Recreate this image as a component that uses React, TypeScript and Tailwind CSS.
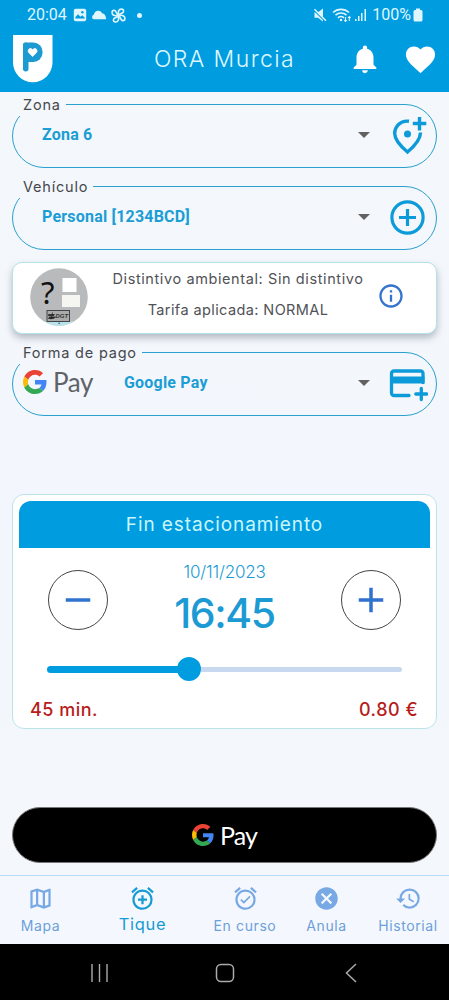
import type { ReactNode } from "react";
import {
  MdAdd,
  MdAlarmOn,
  MdCancel,
  MdFavorite,
  MdHistory,
  MdInfoOutline,
  MdNotifications,
  MdOutlineAddAlarm,
  MdOutlineMap,
  MdRemove,
} from "react-icons/md";

function GoogleG({ className }: { className: string }) {
  return (
    <svg viewBox="0 0 48 48" className={className}>
      <path
        fill="#EA4335"
        d="M24 9.5c3.54 0 6.71 1.22 9.21 3.6l6.85-6.85C35.9 2.38 30.47 0 24 0 14.62 0 6.51 5.38 2.56 13.22l7.98 6.19C12.43 13.72 17.74 9.5 24 9.5z"
      />
      <path
        fill="#4285F4"
        d="M46.98 24.55c0-1.57-.15-3.09-.38-4.55H24v9.02h12.94c-.58 2.96-2.26 5.48-4.78 7.18l7.73 6c4.51-4.18 7.09-10.36 7.09-17.65z"
      />
      <path
        fill="#FBBC05"
        d="M10.53 28.59c-.48-1.45-.76-2.99-.76-4.59s.27-3.14.76-4.59l-7.98-6.19C.92 16.46 0 20.12 0 24c0 3.88.92 7.54 2.56 10.78l7.97-6.19z"
      />
      <path
        fill="#34A853"
        d="M24 48c6.48 0 11.93-2.13 15.89-5.81l-7.73-6c-2.15 1.45-4.92 2.3-8.16 2.3-6.26 0-11.57-4.22-13.47-9.91l-7.98 6.19C6.51 42.62 14.62 48 24 48z"
      />
    </svg>
  );
}

function StatusBar() {
  return (
    <div className="flex h-[30px] items-center pl-[27px] pr-[26px] font-['Roboto',sans-serif] text-[16px] text-[#dff6ff]">
      <span className="w-[46px]">20:04</span>
      <svg viewBox="0 0 14 14" className="size-[14px]">
        <rect x="0.8" y="0.8" width="12.4" height="12.4" rx="2" fill="currentColor" />
        <path d="M2.3 10.4V9.3L5 6.2l2.4 2.6 1.8-1.6 2.6 2.5v.7z" fill="#009ce0" />
        <circle cx="9.4" cy="4.2" r="1.2" fill="#009ce0" />
      </svg>
      <svg viewBox="0 0 15 10" className="ml-[4px] h-[10px] w-[16px]" fill="currentColor">
        <path d="M2.5 9.3a2.3 2.3 0 0 1-.2-4.5C2.8 2.4 4.6.8 6.8.8c2 0 3.300 1.100 4 2.800 2 .2 3.400 1.300 3.900 5.700z" />
      </svg>
      <svg
        viewBox="0 0 14 14"
        className="ml-[4px] size-[15px]"
        fill="none"
        stroke="currentColor"
        strokeWidth="1.5"
      >
        <path d="M7 6.5C6.5 3.5 7 1 9.8 1c2.5 0 2.7 3.3 0 4z" />
        <path d="M7.5 7c3-.5 5.5 0 5.5 2.8 0 2.5-3.3 2.7-4 0z" />
        <path d="M7 7.5c.5 3 0 5.5-2.8 5.5-2.5 0-2.7-3.3 0-4z" />
        <path d="M6.5 7C3.5 7.5 1 7 1 4.2c0-2.5 3.3-2.7 4 0z" />
      </svg>
      <span className="ml-[11px] size-[5px] rounded-full bg-[#dff6ff]" />
      <svg viewBox="0 0 14 14" className="ml-auto size-[14px]" fill="currentColor">
        <path d="M1.500 4.300h3.500L10 .5v13L5 9.700H1.500z" />
        <path d="M1 2.300 12 13.300" stroke="#009ce0" strokeWidth="1.300" />
        <path d="M1.500 1.300 13 12.800" stroke="currentColor" strokeWidth="1.500" />
      </svg>
      <svg
        viewBox="0 0 20 14"
        className="ml-[5px] h-[14px] w-[20px]"
        fill="none"
        stroke="currentColor"
        strokeWidth="1.6"
      >
        <path d="M1 4.5c4.500-4.200 11.500-4.200 16 0" />
        <path d="M3.500 7.200c3.200-2.900 7.800-2.900 11 0" />
        <path d="M6 9.800c1.800-1.600 4-1.600 6 0" />
        <circle cx="9" cy="12" r="1.200" fill="currentColor" stroke="none" />
        <path d="M13.500 9v4.500m-1.300-1.500 1.300 1.500 1.300-1.500M17.300 13V8.500M16 10l1.300-1.500L18.600 10" strokeWidth="1.100" />
      </svg>
      <svg viewBox="0 0 12 12" className="ml-[3px] size-[12px]" fill="currentColor">
        <rect x="0" y="10" width="1.500" height="2" />
        <rect x="3" y="7" width="1.500" height="5" />
        <rect x="6" y="4" width="1.500" height="8" />
        <rect x="9.500" y="0" width="1.500" height="12" />
      </svg>
      <span className="ml-[5px]">100%</span>
      <svg viewBox="0 0 10 14" className="ml-[2px] h-[14px] w-[10px]" fill="currentColor">
        <path d="M3 .5h4V2h1a1.500 1.500 0 0 1 1.500 1.500V12A1.500 1.500 0 0 1 8 13.500H2A1.500 1.500 0 0 1 .5 12V3.500A1.500 1.500 0 0 1 2 2h1z" />
      </svg>
    </div>
  );
}

function Header() {
  return (
    <header className="flex h-[62px] items-center">
      <svg viewBox="0 0 40 48" className="-mt-[4px] ml-[13px] h-[48px] w-[40px] shrink-0">
        <path d="M0 0h39.5v27.5a19.75 19.75 0 0 1-39.5 0z" fill="#fff" />
        {/* parking sign: stem, round bowl and the heart in it */}
        <rect x="10" y="7.500" width="5.500" height="29" rx="2.700" fill="#1b9bd1" />
        <rect x="10" y="7.500" width="19.500" height="19.500" rx="9" fill="#1b9bd1" />
        <rect x="10" y="7.500" width="10" height="19.500" rx="2.500" fill="#1b9bd1" />
        <path
          d="M19.600 21.500l-3.700-3.700c-2.300-3 1.500-6 3.700-3 2.200-3 6 0 3.700 3z"
          fill="#fff"
          stroke="#fff"
          strokeWidth="0.800"
        />
      </svg>
      <h1 className="-mt-[4px] ml-[101px] w-[196px] shrink-0 whitespace-nowrap text-[23px] font-light tracking-[1.400px] text-[#dff8ff]">
        ORA Murcia
      </h1>
      <MdNotifications className="-ml-[2px] -mt-[4px] size-[34px] shrink-0 text-white" />
      <MdFavorite className="-mt-[4px] ml-[21px] size-[35px] shrink-0 text-white" />
    </header>
  );
}

function Caret() {
  return (
    <svg viewBox="0 0 12 6" className="h-[6px] w-[12px] shrink-0" fill="#616161">
      <path d="M0 0h12L6 6z" />
    </svg>
  );
}

type FieldProps = { label: string; value: string; logo?: ReactNode; icon: ReactNode };

function SelectField({ label, value, logo, icon }: FieldProps) {
  return (
    <fieldset className="mx-[12px] h-[76px] rounded-[32px] border border-[#2ba0cf]">
      <legend className="ml-[6px] h-[24px] whitespace-nowrap pl-[4px] pr-[5px] text-[14.500px] leading-[25px] tracking-[0.800px] text-[#46484d]">
        {label}
      </legend>
      <div className="-mt-[12px] flex h-[62px] items-center pr-[8px]">
        <div className={logo ? "w-[111px] pl-[10px]" : "w-[29px]"}>{logo}</div>
        <span className="flex-1 whitespace-nowrap font-['Roboto',sans-serif] text-[16px] font-bold tracking-[0.200px] text-[#1b9dd5]">
          {value}
        </span>
        <Caret />
        <div className="ml-[18px] flex size-[40px] items-center justify-center text-[#0c9bd8]">
          {icon}
        </div>
      </div>
    </fieldset>
  );
}

function PinPlusIcon() {
  return (
    <svg viewBox="0 0 40 40" className="size-[40px]" fill="none" stroke="currentColor" strokeWidth="3.4">
      <path d="M21 6.300C12 5 6.700 12 6.700 18.500c0 5.500 4.500 11.500 12.800 18.500 8.300-7 13-13 13-19.500" />
      <path d="M31.500 2v13.500M24.800 8.500h13.500" />
      <circle cx="19.500" cy="19" r="3.500" fill="currentColor" stroke="none" />
    </svg>
  );
}

function CirclePlusIcon() {
  return (
    <svg viewBox="0 0 40 40" className="size-[40px]" fill="none" stroke="currentColor" strokeWidth="3.2">
      <circle cx="19.500" cy="20.500" r="15.600" />
      <path d="M19.500 12v17M11 20.500h17" />
    </svg>
  );
}

function CardPlusIcon() {
  return (
    <svg viewBox="0 0 40 40" className="size-[40px]" fill="none" stroke="currentColor" strokeWidth="3.3">
      <path
        d="M21 32.500H6A2.500 2.500 0 0 1 3.500 30V10.500A2.500 2.500 0 0 1 6 8h26.500a2.500 2.500 0 0 1 2.500 2.500v9"
        strokeLinecap="round"
      />
      <path d="M2.500 13.500H36.500v7H2.500z" fill="currentColor" stroke="none" />
      <path d="M33.300 25.500v11M27.800 31h11" strokeLinecap="round" />
    </svg>
  );
}

function BadgeCard() {
  return (
    <section className="mx-[12px] mt-[12px] flex h-[72px] items-center rounded-[10px] border border-[#b4e2ea] bg-white pb-[2px] shadow-[0_4px_7px_rgba(90,105,115,0.420)]">
      <svg viewBox="0 0 58 58" className="ml-[17px] size-[58px] shrink-0">
        <clipPath id="badge">
          <circle cx="29" cy="29" r="28.800" />
        </clipPath>
        <g clipPath="url(#badge)">
          <rect width="58" height="58" fill="#b9babb" />
          <rect x="32.500" y="10" width="14" height="14" fill="#fff" />
          <rect x="32" y="27" width="18" height="12" fill="#f5f5f2" />
          <rect x="14" y="53.500" width="30" height="5" fill="#b8e4ea" />
          <rect x="17" y="42.500" width="22.500" height="11" fill="#aaa" stroke="#444" strokeWidth="1" />
          <path d="M18.500 46.500h6l-1 1.200h-5zM19.500 49h6l-2 1.500h-5zM22.500 44.500l-1.500 7" fill="#222" stroke="#222" strokeWidth="0.700" />
          <rect x="28.500" y="54.500" width="1.200" height="1.500" fill="#357" />
        </g>
        <text x="11" y="35.500" fontSize="31" fill="#111" fontFamily="Noto Sans, sans-serif">
          ?
        </text>
        <text x="25.500" y="50.300" fontSize="6" fontStyle="italic" fontWeight="bold" fill="#333" fontFamily="Liberation Sans, sans-serif">
          DGT
        </text>
      </svg>
      <div className="-mt-[5px] ml-[15px] flex w-[270px] shrink-0 flex-col items-center gap-[7px] whitespace-nowrap text-[14.500px] leading-[24px] text-[#505257]">
        <p className="tracking-[0.600px]">Distintivo ambiental: Sin distintivo</p>
        <p className="tracking-[0.400px]">Tarifa aplicada: NORMAL</p>
      </div>
      <MdInfoOutline className="-mt-[2px] ml-[4px] size-[28px] shrink-0 text-[#3474cd]" />
    </section>
  );
}

function TimerCard() {
  return (
    <section className="mx-[12px] mt-[78px] h-[235px] rounded-[12px] border border-[#b9e5e9] bg-white px-[6px] pt-[6px]">
      <h2 className="flex h-[47px] items-center justify-center rounded-t-[12px] bg-[#009ce0] pt-px text-[19px] tracking-[0.900px] text-[#c9f6fb]">
        Fin estacionamiento
      </h2>
      <div className="flex h-[96px] justify-between px-[29px]">
        <button className="mt-[22px] flex size-[60px] items-center justify-center rounded-full border border-[#444] text-[#2f72cf]">
          <MdRemove className="size-[42px]" />
        </button>
        <div className="flex flex-col items-center whitespace-nowrap text-[#1b9ad3]">
          <p className="mt-[12px] text-[17px] font-light leading-[24px] tracking-[-0.200px]">10/11/2023</p>
          <p className="mt-[5px] text-[41px] font-medium leading-[48px] tracking-[-1.400px]">16:45</p>
        </div>
        <button className="mt-[22px] flex size-[60px] items-center justify-center rounded-full border border-[#444] text-[#2f72cf]">
          <MdAdd className="size-[42px]" />
        </button>
      </div>
      <div className="mx-[28px] mt-[13px] flex h-[24px] items-center">
        <div className="h-[7px] w-[134px] rounded-l-full bg-[#009ce0]" />
        <div className="-ml-[4px] size-[24px] rounded-full bg-[#009ce0]" />
        <div className="h-[5px] flex-1 rounded-r-full bg-[#c8d9ef]" />
      </div>
      <div className="mt-[17px] flex justify-between pl-[11px] pr-[12px] text-[18px] font-medium leading-[24px] text-[#b71c1c]">
        <span className="tracking-[0.500px]">45 min.</span>
        <span className="tracking-[0.500px]">0.80 €</span>
      </div>
    </section>
  );
}

const tabs = [
  { label: "Mapa", icon: MdOutlineMap, width: "w-[81px]" },
  { label: "Tique", icon: MdOutlineAddAlarm, width: "w-[123px]", active: true },
  { label: "En curso", icon: MdAlarmOn, width: "w-[82px]" },
  { label: "Anula", icon: MdCancel, width: "w-[81px]" },
  { label: "Historial", icon: MdHistory, width: "w-[82px]" },
];

function TabBar() {
  return (
    <nav className="mt-[12px] flex h-[69px] border-t border-[#b4ddf5] bg-[#f4f8fe]">
      {tabs.map(({ label, icon: Icon, width, active }) => (
        <div
          key={label}
          className={`flex flex-col items-center whitespace-nowrap pt-[9px] ${width} ${
            active ? "text-[#169bd2]" : "text-[#78a9e4]"
          }`}
        >
          <Icon className="size-[27px]" />
          <span
            className={
              active
                ? "-mt-px text-[16.500px] leading-[26px] tracking-[0.700px]"
                : "mt-[2px] text-[14px] leading-[24px] tracking-[0.600px] text-[#6d9fd9]"
            }
          >
            {label}
          </span>
        </div>
      ))}
    </nav>
  );
}

function SystemNav() {
  return (
    <div className="flex h-[56px] items-center bg-black pl-[90px] text-[#aaa]">
      <svg viewBox="0 0 19 20" className="mt-[2px] h-[20px] w-[19px]" stroke="currentColor" strokeWidth="1.4">
        <path d="M2 1v18M9.500 1v18M17 1v18" />
      </svg>
      <svg viewBox="0 0 20 20" className="ml-[106px] mt-[2px] size-[20px]" fill="none" stroke="currentColor" strokeWidth="1.5">
        <rect x="1.500" y="1.500" width="17" height="17" rx="4.500" />
      </svg>
      <svg viewBox="0 0 14 20" className="ml-[109px] mt-[2px] h-[20px] w-[14px]" fill="none" stroke="currentColor" strokeWidth="1.5">
        <path d="M12 1 2.500 10l9.500 9" />
      </svg>
    </div>
  );
}

export default function App() {
  return (
    <div className="flex h-[1000px] w-[449px] flex-col overflow-hidden bg-linear-to-b from-[#f4f8fb] via-[#f3f6fc] to-[#f4f8fb] font-['Inter',sans-serif]">
      <div className="h-[92px] shrink-0 bg-[#009ce0]">
        <StatusBar />
        <Header />
      </div>
      <main>
        <SelectField label="Zona" value="Zona 6" icon={<PinPlusIcon />} />
        <div className="mt-[6px]">
          <SelectField label="Vehículo" value="Personal [1234BCD]" icon={<CirclePlusIcon />} />
        </div>
        <BadgeCard />
        <div className="mt-[6px]">
          <SelectField
            label="Forma de pago"
            value="Google Pay"
            icon={<CardPlusIcon />}
            logo={
              <div className="-mt-[2px] flex items-center">
                <GoogleG className="size-[24px]" />
                <span className="ml-[6px] font-['Lato',sans-serif] text-[26px] leading-[30px] tracking-[-0.400px] text-[#5f6368]">
                  Pay
                </span>
              </div>
            }
          />
        </div>
        <TimerCard />
        <button className="mx-[12px] mt-[78px] flex h-[56px] w-[425px] items-center justify-center rounded-full border border-[#777] bg-black">
          <GoogleG className="size-[22px]" />
          <span className="ml-[6px] font-['Lato',sans-serif] text-[25px] leading-[30px] tracking-[-0.800px] text-white">
            Pay
          </span>
        </button>
      </main>
      <TabBar />
      <SystemNav />
    </div>
  );
}
